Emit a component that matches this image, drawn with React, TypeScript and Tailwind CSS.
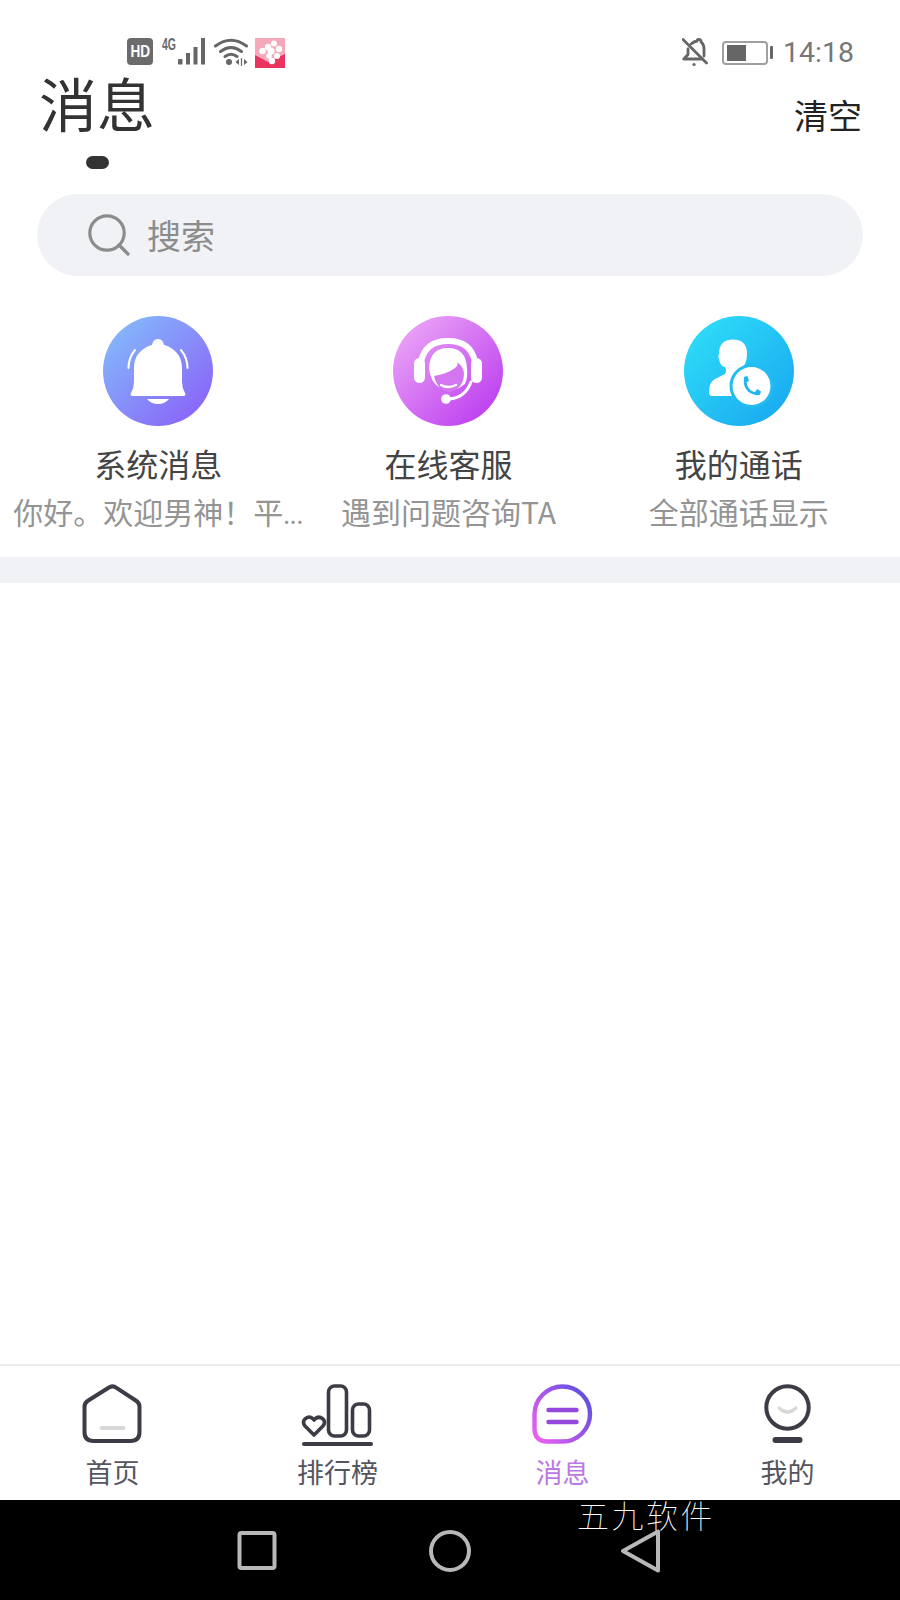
import React from "react";

const CJK = "font-['Noto_Sans_CJK_SC','Noto_Sans',sans-serif]";

function HdIcon() {
  return (
    <span className="flex h-[27px] w-[26px] items-center justify-center rounded-[4px] bg-[#6b6b6b] font-['Liberation_Sans',sans-serif] text-[17px] font-bold leading-none text-white">
      <span className="scale-x-[0.8]">HD</span>
    </span>
  );
}

function SignalIcon() {
  return (
    <div className="relative h-[27px] w-[45px]">
      <span className="absolute left-0 top-[-2px] origin-left scale-x-[0.62] font-['Liberation_Sans',sans-serif] text-[17px] font-bold leading-[17px] text-[#6b6b6b]">
        4G
      </span>
      <svg width="45" height="27" viewBox="0 0 45 27" className="absolute left-0 top-0">
        <g fill="#666">
          <rect x="16" y="21" width="4.5" height="5.5" rx="1" />
          <rect x="24" y="15" width="4" height="11.5" />
          <rect x="31.5" y="9" width="4" height="17.5" />
          <rect x="39" y="0" width="4" height="26.5" />
        </g>
      </svg>
    </div>
  );
}

function WifiIcon() {
  return (
    <svg width="34" height="28" viewBox="0 0 34 28" fill="none" stroke="#666" strokeWidth="3" strokeLinecap="round">
      <path d="M1.5 8 Q17 -3.5 32.5 8" />
      <path d="M6.5 13.5 Q17 5.5 27.5 13.5" />
      <path d="M11 18.5 Q17 14 23 18.5" />
      <circle cx="15" cy="24" r="3" fill="#666" stroke="none" />
      <path d="M25 21 L21.5 24 L25 27 Z M30 21 L33.5 24 L30 27 Z" fill="#666" stroke="none" />
      <path d="M27.5 20.5 V27.5" strokeWidth="1.2" />
    </svg>
  );
}

function AppIcon() {
  return (
    <svg width="30" height="30" viewBox="0 0 30 30">
      <rect width="30" height="30" fill="#f4a8ba" />
      <path d="M0 17 L13 24 L30 16 V30 H0 Z" fill="#e8345f" />
      <g fill="#fff">
        <circle cx="19" cy="5.5" r="3" />
        <circle cx="24" cy="11" r="3.2" />
        <circle cx="13" cy="9" r="3.2" />
        <circle cx="7.5" cy="13" r="3.2" />
        <circle cx="16" cy="13" r="3.6" />
        <circle cx="22" cy="18" r="3" />
        <circle cx="17" cy="23" r="3.2" />
        <circle cx="14" cy="18" r="2.8" />
      </g>
    </svg>
  );
}

function BellOffIcon() {
  return (
    <svg width="26" height="29" viewBox="0 0 26 29" fill="none" stroke="#666" strokeWidth="2.8" strokeLinecap="round" strokeLinejoin="round">
      <path d="M9 6 Q12 3.5 15 3 Q15 1.4 17 1.4 Q19.5 1.8 19 4 Q22.5 6.5 22 13 V18" />
      <path d="M6 11 V16.5 L1.8 21 H20.5" />
      <path d="M1 1.5 L24.5 25" />
      <circle cx="12" cy="26.5" r="1.6" fill="#666" stroke="none" />
    </svg>
  );
}

function BatteryIcon() {
  return (
    <div className="flex items-center gap-[2px]">
      <div className="flex h-[24px] w-[46px] items-center rounded-[4px] border-2 border-[#a0a0a0] px-[3px]">
        <div className="h-[16px] w-[19px] bg-[#666]" />
      </div>
      <div className="h-[13px] w-[3px] rounded-[1px] bg-[#666]" />
    </div>
  );
}

function StatusBar() {
  return (
    <div className="flex h-[73px] shrink-0 items-start justify-between pl-[127px] pr-[46px] pt-[38px]">
      <div className="flex items-start">
        <HdIcon />
        <div className="ml-[9px]">
          <SignalIcon />
        </div>
        <div className="ml-[7px]">
          <WifiIcon />
        </div>
        <div className="ml-[7px]">
          <AppIcon />
        </div>
      </div>
      <div className="flex items-center">
        <BellOffIcon />
        <div className="ml-[14px]">
          <BatteryIcon />
        </div>
        <span className="ml-[10px] font-['Roboto',sans-serif] text-[28.5px] leading-[29px] text-[#777]">14:18</span>
      </div>
    </div>
  );
}

function SearchIcon() {
  return (
    <svg width="42" height="42" viewBox="0 0 42 42" fill="none" stroke="#8c8c8c" strokeWidth="3.2" strokeLinecap="round">
      <circle cx="19" cy="19" r="17.2" />
      <path d="M31 31 L40 40" />
    </svg>
  );
}

function SystemIcon() {
  return (
    <svg width="110" height="110" viewBox="0 0 110 110">
      <defs>
        <linearGradient id="g1" x1="0.1" y1="0.1" x2="0.9" y2="0.9">
          <stop offset="0" stopColor="#84b8fb" />
          <stop offset="1" stopColor="#8a64f8" />
        </linearGradient>
      </defs>
      <circle cx="55" cy="55" r="55" fill="url(#g1)" />
      <path
        d="M55 23 Q60 23 61 29 C72 32 79 40 79 52 V66 Q79 72 82 77 Q83.5 80 80 80 H30 Q26.5 80 28 77 Q31 72 31 66 V52 C31 40 38 32 49 29 Q50 23 55 23 Z"
        fill="#fff"
      />
      <path d="M44 83 H66 Q62 88 55 88 Q48 88 44 83 Z" fill="#fff" />
      <path d="M25.5 52 Q25.5 42 32 34 M84.5 52 Q84.5 42 78 34" fill="none" stroke="#fff" strokeWidth="2" strokeLinecap="round" />
    </svg>
  );
}

function ServiceIcon() {
  return (
    <svg width="110" height="110" viewBox="0 0 110 110">
      <defs>
        <linearGradient id="g2" x1="0.1" y1="0.1" x2="0.9" y2="0.9">
          <stop offset="0" stopColor="#eaa4f6" />
          <stop offset="1" stopColor="#bd3ef0" />
        </linearGradient>
      </defs>
      <circle cx="55" cy="55" r="55" fill="url(#g2)" />
      <path d="M28 46 Q32 25 55 25 Q78 25 82 46" fill="none" stroke="#fff" strokeWidth="6" />
      <rect x="21" y="42" width="11" height="25" rx="5.5" fill="#fff" />
      <rect x="78" y="42" width="11" height="25" rx="5.5" fill="#fff" />
      <path d="M36 52 Q37 32 55 32 Q73 32 74 52 Q75 62 72 68 L66 72 Q58 76 48 72 Q38 68 36 52 Z" fill="#fff" />
      <path d="M41 60 Q54 58 62 52 Q66 49 64 46 Q70 50 71 57 Q71 73 56 76 Q44 74 41 60 Z" fill="#d576f1" />
      <path d="M48 69 Q55 73 63 69" fill="none" stroke="#fff" strokeWidth="2.4" strokeLinecap="round" />
      <path d="M78 66 Q72 82 56 83" fill="none" stroke="#fff" strokeWidth="3" strokeLinecap="round" />
      <circle cx="53" cy="83" r="4.8" fill="#fff" />
    </svg>
  );
}

function CallIcon() {
  return (
    <svg width="110" height="110" viewBox="0 0 110 110">
      <defs>
        <linearGradient id="g3" x1="0.1" y1="0.1" x2="0.9" y2="0.9">
          <stop offset="0" stopColor="#2edcf8" />
          <stop offset="1" stopColor="#1aaaf0" />
        </linearGradient>
      </defs>
      <circle cx="55" cy="55" r="55" fill="url(#g3)" />
      <path
        d="M49 23.5 Q63 23.5 63 38 Q63 46 59 51 Q59 55 63 57 L70 60 L48 80 H28 Q25 80 25 76 Q25 66 31 63 L41 58 Q43 55 41 51 Q36 50 35 43 Q33.5 41 35 38 Q35 23.5 49 23.5 Z"
        fill="#fff"
      />
      <circle cx="67.5" cy="70" r="22" fill="#22bcf2" />
      <circle cx="67.5" cy="70" r="19" fill="#fff" />
      <path d="M61.5 62 Q60 70 65.5 75 Q70 78.5 75 77.5" fill="none" stroke="#22b6ee" strokeWidth="2.8" strokeLinecap="round" />
      <path d="M59.5 61.5 L63.5 60 L65 65 L62 66.5 Z M71 76.5 L73 73 L77 75.5 L75.5 79 Z" fill="#22b6ee" />
    </svg>
  );
}

function Shortcut({ icon, title, sub, dots }: { icon: React.ReactNode; title: string; sub: string; dots?: boolean }) {
  return (
    <div className="flex flex-col items-center">
      {icon}
      <div className="mt-[21px] text-[32px] leading-[32px] text-[#444]">{title}</div>
      <div className="mt-[17px] whitespace-nowrap text-[30px] leading-[30px] text-[#949494]">
        {sub}
        {dots ? <span className="text-[24px] leading-none">...</span> : null}
      </div>
    </div>
  );
}

function HomeNav() {
  return (
    <svg width="75" height="62" viewBox="0 0 60 62" fill="none" stroke="#3c3c46" strokeWidth="4" strokeLinecap="round" strokeLinejoin="round">
      <path d="M26 3.8 Q30 1 34 3.8 L54 17 Q57 19 57 23 V48 Q57 57 48 57 H11 Q2 57 2 48 V23 Q2 19 5 17 Z" />
      <path d="M19 44 H41" stroke="#d8d8d8" />
    </svg>
  );
}

function RankNav() {
  return (
    <svg width="75" height="62" viewBox="0 0 75 62" fill="none" stroke="#3c3c46" strokeWidth="3.6" strokeLinecap="round" strokeLinejoin="round">
      <rect x="28.5" y="2" width="18" height="50" rx="6" />
      <rect x="52.5" y="20" width="17" height="32" rx="6" />
      <path d="M14 51 L5 42 Q2 38 5 35 Q10 31 14 36 Q18 31 23 35 Q26 38 23 42 Z" />
      <path d="M4 60 H71" strokeWidth="4" />
    </svg>
  );
}

function MessageNav() {
  return (
    <svg width="75" height="62" viewBox="0 0 60 62" fill="none" strokeLinecap="round" className="ml-[-2px]">
      <defs>
        <linearGradient id="g4" x1="0" y1="1" x2="1" y2="0.3">
          <stop offset="0" stopColor="#f060f2" />
          <stop offset="1" stopColor="#6450e0" />
        </linearGradient>
      </defs>
      <path
        d="M31 2.5 A27.5 27.5 0 1 1 31 57.5 H16 Q3 57.5 3 44 V30 A28 28 0 0 1 31 2.5 Z"
        stroke="url(#g4)"
        strokeWidth="4.4"
      />
      <path d="M17 26 H45 M17 38 H45" stroke="#9448dc" strokeWidth="4.4" />
    </svg>
  );
}

function MeNav() {
  return (
    <svg width="75" height="62" viewBox="0 0 60 62" fill="none" strokeLinecap="round">
      <circle cx="30" cy="23.5" r="21.2" stroke="#3c3c46" strokeWidth="4" />
      <path d="M21.5 24 Q30 32 38.5 24" stroke="#d8d8d8" strokeWidth="3.2" />
      <path d="M18 56 H42" stroke="#3c3c46" strokeWidth="6" />
    </svg>
  );
}

function NavItem({ icon, label, active }: { icon: React.ReactNode; label: string; active?: boolean }) {
  return (
    <div className="flex flex-col items-center pt-[18px]">
      {icon}
      <div className={`mt-[11px] text-[27px] leading-[30px] ${active ? "text-[#bb78e6]" : "text-[#55555f]"}`}>{label}</div>
    </div>
  );
}

export default function App() {
  return (
    <div className={`relative flex h-[1600px] w-[900px] flex-col overflow-hidden bg-white ${CJK}`}>
      <StatusBar />

      <div className="flex items-start justify-between pl-[39px] pr-[38px]">
        <div>
          <h1 className="text-[58px] font-normal leading-[58px] text-[#333]">消息</h1>
          <div className="ml-[47px] mt-[25px] h-[13px] w-[23px] rounded-full bg-[#333]" />
        </div>
        <button className="mt-[25px] text-[34px] leading-[34px] text-[#222]">清空</button>
      </div>

      <div className="mx-[37px] mt-[25px] flex h-[82px] items-center rounded-full bg-[#f1f2f6] pl-[51px]">
        <SearchIcon />
        <span className="ml-[17px] text-[34px] leading-[34px] text-[#8c8c8c]">搜索</span>
      </div>

      <div className="grid grid-cols-3 pl-[13px] pr-[16px] pt-[40px]">
        <Shortcut icon={<SystemIcon />} title="系统消息" sub="你好。欢迎男神！平" dots />
        <Shortcut icon={<ServiceIcon />} title="在线客服" sub="遇到问题咨询TA" />
        <Shortcut icon={<CallIcon />} title="我的通话" sub="全部通话显示" />
      </div>

      <div className="mt-[31px] h-[26px] shrink-0 bg-[#f1f2f6]" />

      <div className="flex-1" />

      <nav className="grid h-[136px] shrink-0 grid-cols-4 border-t-2 border-[#ececec] bg-white">
        <NavItem icon={<HomeNav />} label="首页" />
        <NavItem icon={<RankNav />} label="排行榜" />
        <NavItem icon={<MessageNav />} label="消息" active />
        <NavItem icon={<MeNav />} label="我的" />
      </nav>

      <div className="relative flex h-[100px] shrink-0 items-center justify-center gap-[145px] bg-black pt-[1px]">
        <div className="absolute left-[577px] top-[-3px] text-[32px] font-thin leading-[34px] tracking-[2.5px] text-white">五九软件</div>
        <svg width="48" height="48" viewBox="0 0 48 48" fill="none" stroke="#b8b8b8" strokeWidth="4" strokeLinejoin="round">
          <rect x="6.5" y="6" width="35" height="35" rx="2" />
        </svg>
        <svg width="48" height="48" viewBox="0 0 48 48" fill="none" stroke="#b8b8b8" strokeWidth="4">
          <circle cx="24" cy="24" r="19" />
        </svg>
        <svg width="48" height="48" viewBox="0 0 48 48" fill="none" stroke="#b8b8b8" strokeWidth="4" strokeLinejoin="round">
          <path d="M39 4.5 V43.5 L4 24 Z" />
        </svg>
      </div>
    </div>
  );
}
